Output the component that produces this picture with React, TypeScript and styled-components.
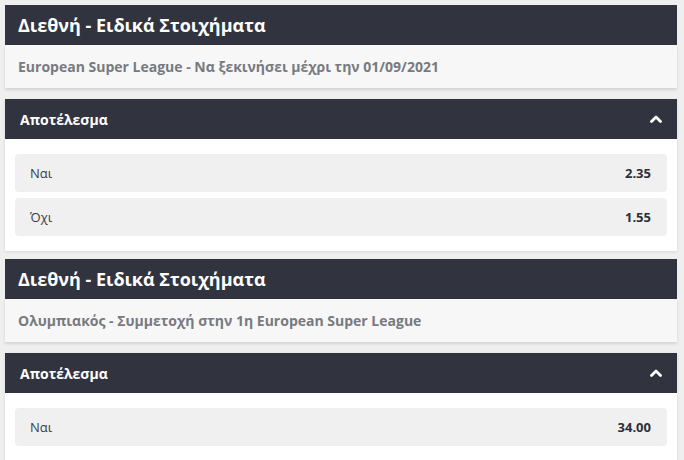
import React from 'react';
import styled, { createGlobalStyle } from 'styled-components';

const GlobalStyle = createGlobalStyle`
  html, body {
    margin: 0;
    padding: 0;
    background: #efefef;
    font-family: 'Open Sans', 'Noto Sans', sans-serif;
  }
`;

const Page = styled.div`
  display: flex;
  flex-direction: column;
  gap: 8px;
  padding: 5px 7px 0 5px;
`;

const Event = styled.section`
  display: flex;
  flex-direction: column;
`;

const EventHeader = styled.div`
  height: 40px;
  background: #31343f;
  color: #fff;
  display: flex;
  align-items: center;
  padding: 0 13px;
  font-size: 18px;
  font-weight: 700;
`;

const EventSubtitle = styled.div`
  height: 43px;
  background: #f7f7f7;
  color: #777a80;
  display: flex;
  align-items: center;
  padding: 0 13px;
  font-size: 14px;
  font-weight: 700;
  box-shadow: 0 2px 3px rgba(0, 0, 0, 0.12);
  margin-bottom: 11px;
`;

const Market = styled.div`
  display: flex;
  flex-direction: column;
  background: #fff;
  box-shadow: 0 1px 3px rgba(0, 0, 0, 0.1);
`;

const MarketHeader = styled.div`
  height: 40px;
  background: #31343f;
  color: #fff;
  display: flex;
  align-items: center;
  justify-content: space-between;
  padding: 0 15px 0 15px;
  font-size: 14px;
  font-weight: 700;
`;

const MarketBody = styled.div`
  display: flex;
  flex-direction: column;
  gap: 6px;
  padding: 15px 10px 15px 10px;
`;

const Outcome = styled.div`
  height: 38px;
  background: #f0f0f0;
  border-radius: 4px;
  display: flex;
  align-items: center;
  justify-content: space-between;
  padding: 0 16px 0 15px;
  font-size: 13px;
  color: #3a3d45;
`;

const Odds = styled.span`
  font-weight: 700;
  color: #2c2f38;
`;

const Chevron = () => (
  <svg width="12" height="8" viewBox="0 0 12 8">
    <path d="M1.5 6.5 L6 2 L10.5 6.5" fill="none" stroke="#fff" strokeWidth="2.8" strokeLinecap="round" strokeLinejoin="round" />
  </svg>
);

interface Selection {
  label: string;
  odds: string;
}

const events: { title: string; subtitle: string; outcomes: Selection[] }[] = [
  {
    title: 'Διεθνή - Ειδικά Στοιχήματα',
    subtitle: 'European Super League - Να ξεκινήσει μέχρι την 01/09/2021',
    outcomes: [
      { label: 'Ναι', odds: '2.35' },
      { label: 'Όχι', odds: '1.55' },
    ],
  },
  {
    title: 'Διεθνή - Ειδικά Στοιχήματα',
    subtitle: 'Ολυμπιακός - Συμμετοχή στην 1η European Super League',
    outcomes: [{ label: 'Ναι', odds: '34.00' }],
  },
];

export default function App() {
  return (
    <>
      <GlobalStyle />
      <Page>
        {events.map((ev, i) => (
          <Event key={i}>
            <EventHeader>{ev.title}</EventHeader>
            <EventSubtitle>{ev.subtitle}</EventSubtitle>
            <Market>
              <MarketHeader>
                <span>Αποτέλεσμα</span>
                <Chevron />
              </MarketHeader>
              <MarketBody>
                {ev.outcomes.map((o) => (
                  <Outcome key={o.label}>
                    <span>{o.label}</span>
                    <Odds>{o.odds}</Odds>
                  </Outcome>
                ))}
              </MarketBody>
            </Market>
          </Event>
        ))}
      </Page>
    </>
  );
}
